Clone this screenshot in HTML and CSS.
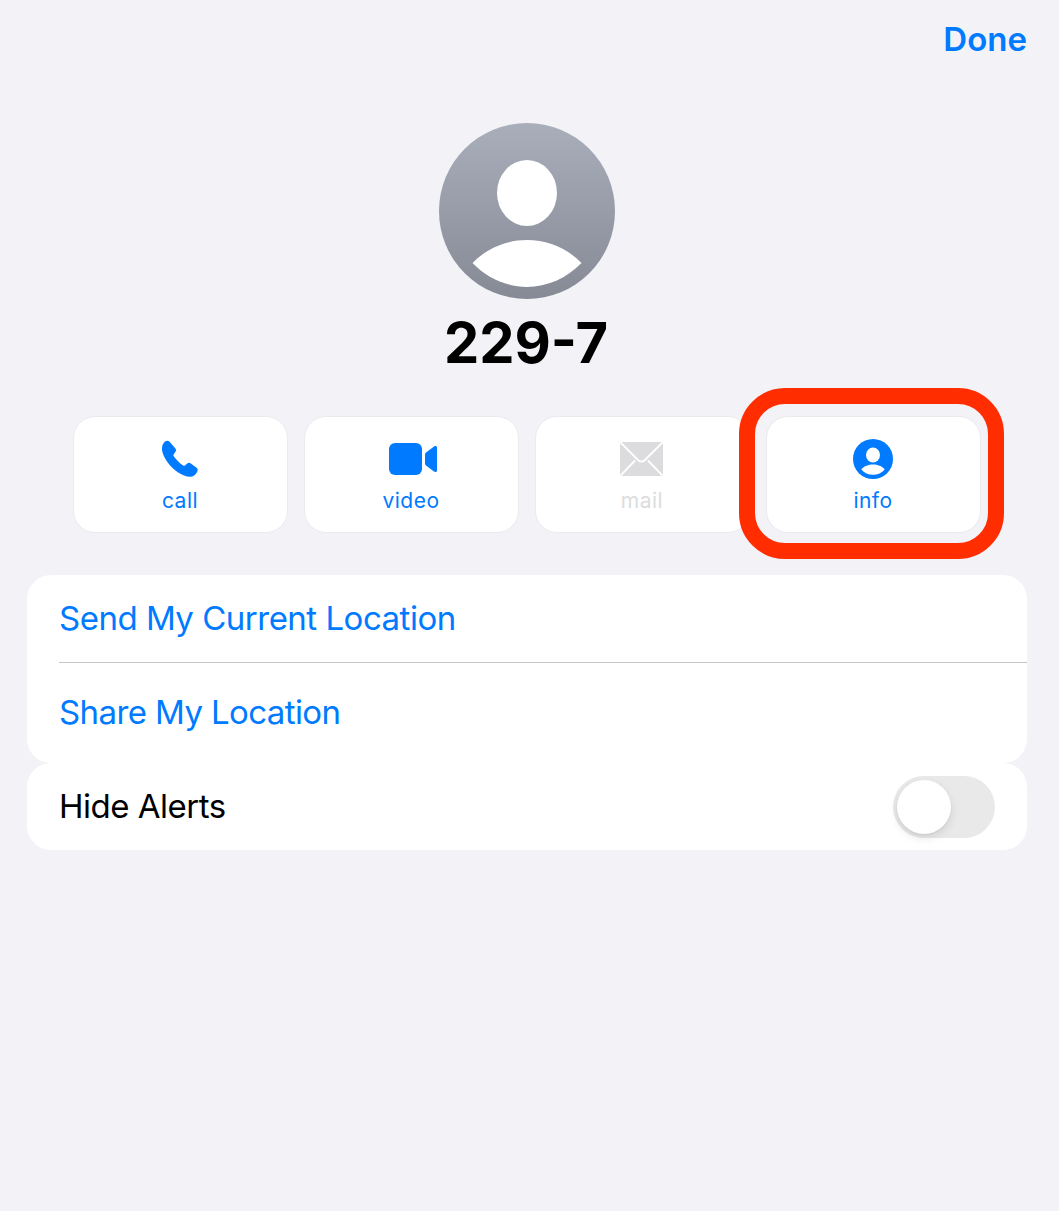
FILE: index.html
```html
<!DOCTYPE html>
<html lang="en">
<head>
  <meta charset="UTF-8" />
  <meta name="viewport" content="width=device-width, initial-scale=1.0" />
  <title>Contact Details</title>
  <link rel="stylesheet" href="styles.css">
</head>
<body>
  <header class="top-bar">
    <span class="done">Done</span>
  </header>

  <div class="contact">
    <svg class="avatar" width="176" height="176" viewBox="0 0 176 176">
      <defs>
        <linearGradient id="avatar-fill" x1="0" y1="0" x2="0" y2="1">
          <stop offset="0" stop-color="#a9aebb" />
          <stop offset="1" stop-color="#858a95" />
        </linearGradient>
      </defs>
      <circle cx="88" cy="88" r="88" fill="url(#avatar-fill)" />
      <ellipse cx="88" cy="70" rx="30" ry="33" fill="#fff" />
      <path d="M33.500 140 C48 125 68 117 88 117 C108 117 128 125 142.500 140 C128 155 108 164 88 164 C68 164 48 155 33.500 140 Z" fill="#fff" />
    </svg>
    <h1 class="name">229-7</h1>
  </div>

  <div class="actions">
    <div class="action">
      <svg class="action-icon icon-left" width="38" height="38" viewBox="0 0 38 38">
        <path d="M4 1.600 C5.500 .4 7.600 .4 8.600 1.800 L14.400 8.600 C15.300 9.800 15.200 11 14.300 12.100 L12.600 14.400 C12.200 15 12.300 15.600 12.700 16.200 C15 19.600 18.800 23.400 22.200 25.400 C22.800 25.800 23.400 25.800 24 25.400 L26.200 23.600 C27.400 22.600 28.600 22.600 29.800 23.400 L35.600 27.800 C37 28.900 37 30.600 36 32.200 C34.600 35 32 37 28.600 36.800 C16 36 1.800 20 1 9.600 C.8 6 2 3.200 4 1.600 Z" fill="#007aff" />
      </svg>
      <span class="action-label">call</span>
    </div>
    <div class="action">
      <svg class="action-icon icon-right" width="48" height="38" viewBox="0 0 48 38">
        <rect x="0" y="3" width="33" height="32" rx="6" fill="#007aff" />
        <path d="M36 14.500 C36 13.600 36.300 13 37 12.400 L45 6.400 C46.400 5.400 48 6 48 7.800 L48 30.200 C48 32 46.400 32.600 45 31.600 L37 25.600 C36.300 25 36 24.400 36 23.500 Z" fill="#007aff" />
      </svg>
      <span class="action-label">video</span>
    </div>
    <div class="action disabled">
      <svg class="action-icon icon-left" width="43" height="38" viewBox="0 0 43 38">
        <rect x="0" y="2" width="43" height="34" rx="1.500" fill="#dcdcde" />
        <path d="M0.500 2.500 L18 20 C20.100 22 22.900 22 25 20 L42.500 2.500 M0.500 35.500 L15 20.500 M42.500 35.500 L28 20.500" fill="none" stroke="#fff" stroke-width="1.800" />
      </svg>
      <span class="action-label">mail</span>
    </div>
    <div class="action highlighted">
      <svg class="action-icon icon-left" width="40" height="40" viewBox="0 0 40 40">
        <circle cx="20" cy="20" r="20" fill="#007aff" />
        <ellipse cx="20" cy="16" rx="7" ry="7.600" fill="#fff" />
        <path d="M8.300 30.500 C11 27 15.500 25.600 20 25.600 C24.500 25.600 29 27 31.700 30.500 C29 34 24.500 35.800 20 35.800 C15.500 35.800 11 34 8.300 30.500 Z" fill="#fff" />
      </svg>
      <span class="action-label">info</span>
    </div>
  </div>

  <div class="group">
    <div class="row link">Send My Current Location</div>
    <div class="row link">Share My Location</div>
  </div>

  <div class="group">
    <div class="row">
      Hide Alerts
      <span class="toggle"><span class="knob"></span></span>
    </div>
  </div>
</body>
</html>
```

FILE: styles.css
```css
*, *::after {
  box-sizing: border-box;
}

body {
  margin: 0;
  height: 1211px;
  overflow: hidden;
  font-family: Inter, "Liberation Sans", sans-serif;
  background-color: #f2f2f7;
  color: #000;
}

.top-bar {
  display: flex;
  justify-content: flex-end;
  height: 123px;
  padding: 17px 32px 0 0;
}

.done {
  font-size: 33px;
  line-height: 44px;
  font-weight: 600;
  color: #007aff;
}

.contact {
  display: flex;
  flex-direction: column;
  align-items: center;
  padding-right: 5px;
}

.avatar {
  display: block;
}

.name {
  margin: 9px 2px 0 0;
  height: 108px;
  font-size: 56px;
  line-height: 70px;
  font-weight: 700;
}

.actions {
  display: flex;
  gap: 16px;
  padding: 0 78px 0 73px;
}

.action {
  position: relative;
  display: flex;
  flex-direction: column;
  align-items: center;
  width: 215px;
  height: 117px;
  padding-top: 22px;
  background-color: #fff;
  border: 1px solid #ebebef;
  border-radius: 22px;
  font-size: 21px;
  line-height: 28px;
  letter-spacing: 0.5px;
  color: #007aff;
}

.action-icon {
  display: block;
  height: 40px;
  margin-bottom: 8px;
}

.action-label {
  margin-left: -1px;
}

.icon-left {
  margin-left: -2px;
}

.icon-right {
  margin-left: 2px;
}

.action.disabled {
  color: #dcdcde;
}

/* annotation drawn over the info button */
.highlighted::after {
  content: "";
  position: absolute;
  top: -29px;
  left: -28px;
  width: 265px;
  height: 171px;
  border: 16px solid #ff2d00;
  border-radius: 46px;
}

.group {
  margin: 0 32px 0 27px;
  background-color: #fff;
  border-radius: 24px;
}

.actions + .group {
  margin-top: 42px;
}

.row {
  display: flex;
  align-items: center;
  justify-content: space-between;
  height: 87px;
  padding: 0 32px 2px 32px;
  font-size: 33px;
  letter-spacing: -0.5px;
}

.link {
  color: #007aff;
}

.link + .link {
  height: 101px;
  margin-left: 32px;
  padding: 0 0 3px;
  border-top: 1px solid #c6c6c8;
  letter-spacing: -0.6px;
}

.toggle {
  display: block;
  width: 102px;
  height: 62px;
  margin-top: 2px;
  padding: 4px;
  background-color: #e9e9ea;
  border-radius: 31px;
}

.knob {
  display: block;
  width: 54px;
  height: 54px;
  background-color: #fff;
  border-radius: 50%;
  box-shadow: 0 4px 10px rgba(0, 0, 0, 0.1), 0 1px 2px rgba(0, 0, 0, 0.06);
}
```
